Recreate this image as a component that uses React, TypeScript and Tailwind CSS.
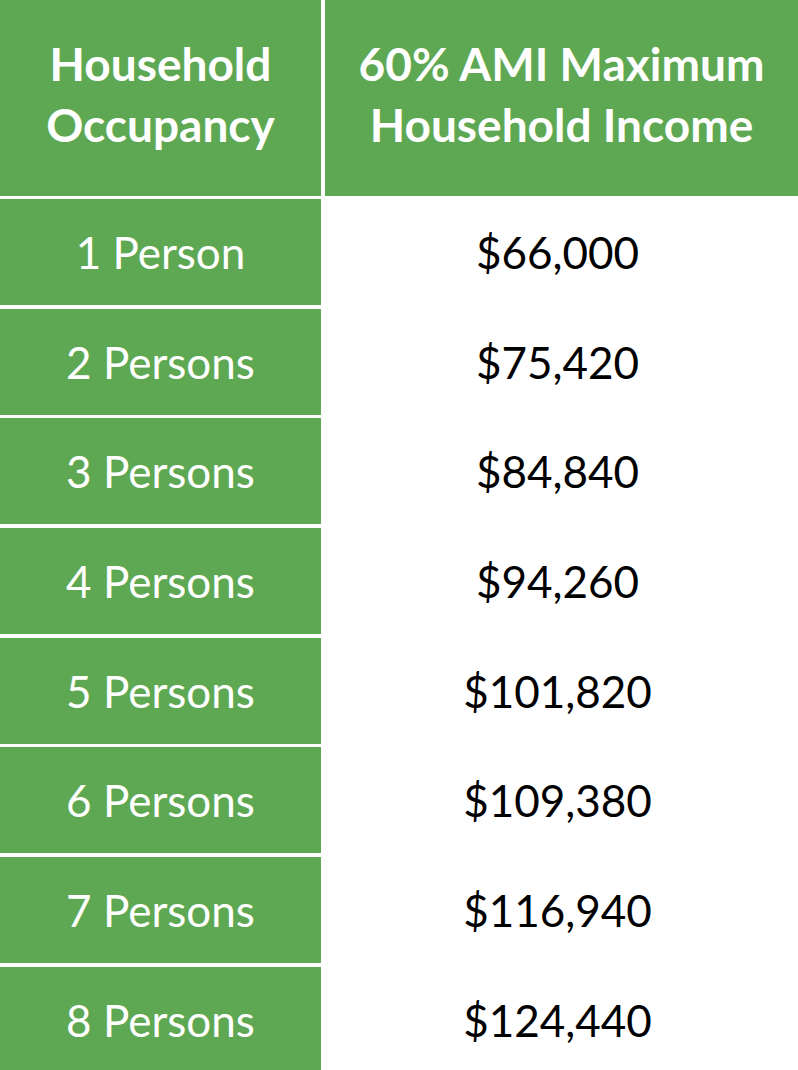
const rows = [
  ['1 Person', '$66,000'],
  ['2 Persons', '$75,420'],
  ['3 Persons', '$84,840'],
  ['4 Persons', '$94,260'],
  ['5 Persons', '$101,820'],
  ['6 Persons', '$109,380'],
  ['7 Persons', '$116,940'],
  ['8 Persons', '$124,440'],
]

export default function App() {
  return (
    <div className="flex h-[1070px] w-[798px] flex-col gap-[3px] overflow-hidden bg-white font-['Lato','Open_Sans',sans-serif]">
      <div className="flex h-[196px] shrink-0 gap-[4px]">
        <div className="flex w-[321px] items-center justify-center bg-[#5ea853] pb-[9px] text-center text-[46px] font-bold leading-[61px] text-white">
          Household
          <br />
          Occupancy
        </div>
        <div className="flex flex-1 items-center justify-center bg-[#5ea853] pb-[9px] text-center text-[46px] font-bold leading-[61px] text-white">
          60% AMI Maximum
          <br />
          Household Income
        </div>
      </div>
      <div className="flex flex-col gap-[3.7px]">
        {rows.map(([who, income]) => (
          <div key={who} className="flex h-[106px] shrink-0 gap-[4px]">
            <div className="flex w-[321px] items-center justify-center bg-[#5ea853] text-[44px] text-white">
              {who}
            </div>
            <div className="flex flex-1 items-center justify-center pr-[8px] text-[44px] text-black">{income}</div>
          </div>
        ))}
      </div>
    </div>
  )
}
